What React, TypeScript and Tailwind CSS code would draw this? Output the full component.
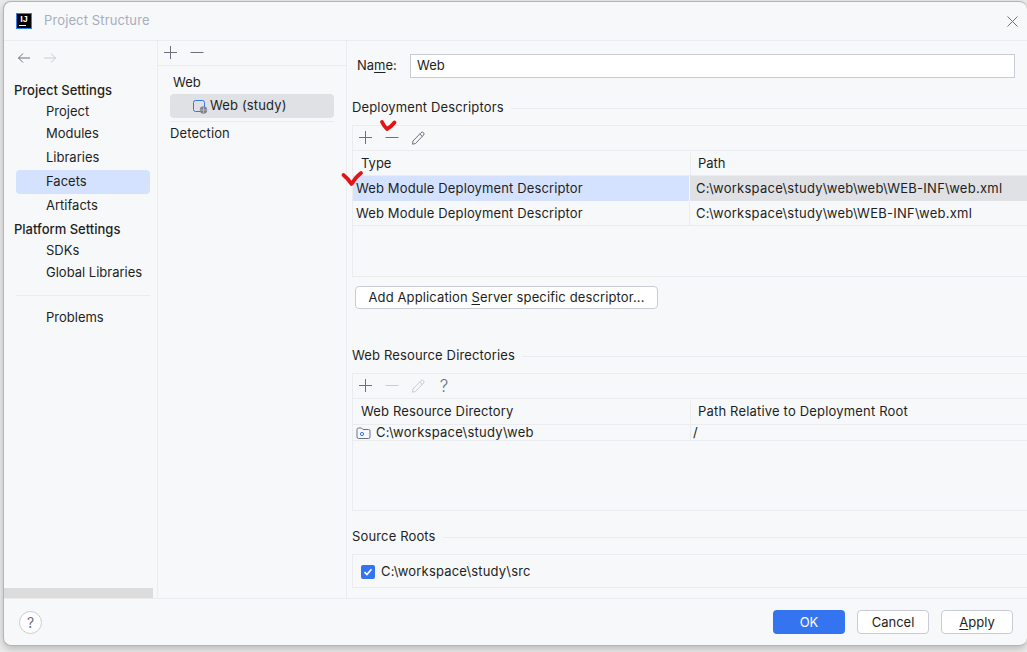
import React from "react";

const Plus = ({ c = "#6c707e" }: { c?: string }) => (
  <svg width="16" height="16" viewBox="0 0 16 16" fill="none" stroke={c} strokeWidth="1">
    <path d="M7.5 1v13M1 7.5h13" />
  </svg>
);
const Minus = ({ c = "#6c707e" }: { c?: string }) => (
  <svg width="16" height="16" viewBox="0 0 16 16" fill="none" stroke={c} strokeWidth="1">
    <path d="M1.5 7.5h13" />
  </svg>
);
const Pencil = ({ c = "#6c707e" }: { c?: string }) => (
  <svg width="16" height="16" viewBox="0 0 16 16" fill="none" stroke={c} strokeWidth="1">
    <path d="M3 11l8-8.3a1.7 1.7 0 0 1 2.5 0 1.7 1.7 0 0 1 0 2.4L5.5 13.5l-3 .7zM9.8 4l2.6 2.5" />
  </svg>
);

const NavItem = ({ label, h, selected }: { label: string; h: string; selected?: boolean }) => (
  <div className={`${h} flex items-center pl-[30px] ml-3 mr-[7px] rounded-[4px] ${selected ? "bg-[#d4e2ff]" : ""}`}>{label}</div>
);

const GroupTitle = ({ title }: { title: string }) => (
  <div className="flex items-center h-4 gap-[7px] pl-[5px]">
    <span className="tracking-[0.14px]">{title}</span>
    <div className="flex-1 h-px bg-[#ebecf0]" />
  </div>
);

export default function App() {
  return (
    <div
      className="relative w-[1027px] h-[652px] overflow-hidden bg-[#ececec] pl-[3px] pt-px text-[13px] text-[#1e1f22]"
      style={{ fontFamily: "Inter, 'Liberation Sans', sans-serif" }}
    >
      <div className="w-[1024px] h-[645px] bg-[#f7f8fa] rounded-[8px] border-t border-l border-b border-[#b4b4b4] shadow-[0_3px_8px_rgba(0,0,0,0.22)] flex flex-col overflow-hidden">
        {/* Title bar */}
        <div className="h-[39px] shrink-0 flex items-center border-b border-[#ebecf0] pl-3 pr-[9px]">
          <div className="w-4 h-4 bg-black border border-[#2f7fe8] flex flex-col items-center text-white font-bold text-[9px] leading-[9px] pt-px" style={{ fontFamily: "'Liberation Sans', sans-serif" }}>
            <span>IJ</span>
            <span className="w-[7px] h-px bg-white mt-px mr-[3px]" />
          </div>
          <span className="ml-[12px] text-[#a8adbd] tracking-[0.12px]">Project Structure</span>
          <svg className="ml-auto" width="11" height="11" viewBox="0 0 11 11" fill="none" stroke="#6c707e" strokeWidth="1">
            <path d="M.5.5l10 10M10.5.5l-10 10" />
          </svg>
        </div>

        <div className="h-[558px] shrink-0 flex border-b border-[#ebecf0]">
          {/* Sidebar */}
          <div className="w-[154px] shrink-0 border-r border-[#ebecf0] flex flex-col relative">
            <div className="h-[32px] flex items-center pl-3 gap-[10px] pt-[1px]">
              <svg width="16" height="16" viewBox="0 0 16 16" fill="none" stroke="#6c707e"><path d="M14 8H2.5M7 3.5L2.5 8 7 12.5" /></svg>
              <svg width="16" height="16" viewBox="0 0 16 16" fill="none" stroke="#c9ccd6"><path d="M2 8h11.5M9 3.5L13.5 8 9 12.5" /></svg>
            </div>
            <div className="h-[17px] mt-[9px] pl-[10px] font-medium flex items-center">Project Settings</div>
            <div className="h-[22px] mt-[2px] flex items-center pl-[42px]">Project</div>
            <div className="h-[22px] flex items-center pl-[42px]">Modules</div>
            <NavItem label="Libraries" h="h-[24px] mt-[1px]" />
            <NavItem label="Facets" h="h-[24px]" selected />
            <NavItem label="Artifacts" h="h-[24px]" />
            <div className="h-[24px] pl-[10px] font-medium flex items-center">Platform Settings</div>
            <div className="h-[22px] mt-[-2px] flex items-center pl-[42px]">SDKs</div>
            <div className="h-[22px] flex items-center pl-[42px]">Global Libraries</div>
            <div className="h-px bg-[#ebecf0] ml-3 mr-[7px] mt-[11px]" />
            <div className="h-[22px] mt-[11px] flex items-center pl-[42px]">Problems</div>
            <div className="mt-auto h-[10px] w-[149px] bg-[#dcdcdd]" />
          </div>

          {/* Middle column */}
          <div className="w-[189px] shrink-0 border-r border-[#ebecf0] flex flex-col">
            <div className="h-[25px] shrink-0 border-b border-[#ebecf0] flex items-center pl-[5px] gap-[10px]">
              <Plus />
              <Minus />
            </div>
            <div className="h-[28px] flex items-end pl-[15px] pb-[2px]">Web</div>
            <div className="h-[24px] ml-3 mr-3 bg-[#dfe1e5] rounded-[4px] flex items-center pl-[23px] gap-[2px]">
              <svg width="15" height="15" viewBox="0 0 15 15" fill="none">
                <rect x="0.5" y="1.5" width="11" height="11" rx="2" stroke="#3574f0" />
                <circle cx="10.5" cy="11" r="3.7" fill="#7e828e" />
                <path d="M7 11h7M10.5 7.5v7" stroke="#dfe1e5" strokeWidth="0.5" />
              </svg>
              <span className="tracking-[0.15px]">Web (study)</span>
            </div>
            <div className="h-px bg-[#ebecf0] mx-3 mt-[3px]" />
            <div className="h-[24px] flex items-center pl-3 tracking-[0.1px]">Detection</div>
          </div>

          {/* Right panel */}
          <div className="flex-1 min-w-0 flex flex-col">
            <div className="h-[24px] mt-[13px] flex items-center pl-[10px]">
              <span className="w-[53px]">
                Na<span className="underline underline-offset-2">m</span>e:
              </span>
              <div className="w-[605px] h-[24px] bg-white border border-[#c9ccd6] flex items-center pl-[6px]">Web</div>
            </div>

            <div className="mt-[22px]"><GroupTitle title="Deployment Descriptors" /></div>
            <div className="mt-[9px] ml-[5px] h-[152px] border-t border-l border-b border-[#ebecf0] flex flex-col">
              <div className="h-[25px] shrink-0 border-b border-[#ebecf0] flex items-center pl-[5px] gap-[10px]">
                <Plus />
                <Minus />
                <Pencil />
              </div>
              <div className="h-[24px] pt-px shrink-0 flex items-center">
                <div className="w-[337px] pl-2">Type</div>
                <div className="flex-1 h-[22px] border-l border-[#ebecf0] pl-[7px] flex items-center">Path</div>
              </div>
              <div className="h-[26px] shrink-0 flex border-t border-[#ebecf0]">
                <div className="w-[336px] bg-[#d4e2ff] pl-[3px] flex items-center tracking-[0.13px]">Web Module Deployment Descriptor</div>
                <div className="flex-1 bg-[#dfe1e5] pl-[6px] ml-px flex items-center tracking-[0.26px]">C:\workspace\study\web\web\WEB-INF\web.xml</div>
              </div>
              <div className="h-[25px] shrink-0 flex border-b border-[#ebecf0]">
                <div className="w-[336px] pl-[3px] pt-px flex items-center tracking-[0.13px]">Web Module Deployment Descriptor</div>
                <div className="flex-1 border-l border-[#ebecf0] pl-[6px] pt-px flex items-center tracking-[0.26px]">C:\workspace\study\web\WEB-INF\web.xml</div>
              </div>
            </div>
            <div className="mt-[9px] ml-2 w-[303px] h-[23px] bg-white border border-[#c9ccd6] rounded-[4px] flex items-center justify-center">
              <span className="tracking-[0.12px]">
                Add Application <span className="underline underline-offset-2">S</span>erver specific descriptor...
              </span>
            </div>

            <div className="mt-[39px]"><GroupTitle title="Web Resource Directories" /></div>
            <div className="mt-[9px] ml-[5px] h-[138px] border-t border-l border-b border-[#ebecf0] flex flex-col">
              <div className="h-[25px] shrink-0 border-b border-[#ebecf0] flex items-center pl-[5px] gap-[10px]">
                <Plus />
                <Minus c="#c9ccd6" />
                <Pencil c="#c9ccd6" />
                <span className="w-4 text-center text-[17px] leading-4 font-light text-[#6c707e]">?</span>
              </div>
              <div className="h-[25px] shrink-0 flex items-center">
                <div className="w-[337px] pl-2 tracking-[0.14px]">Web Resource Directory</div>
                <div className="flex-1 h-[22px] border-l border-[#ebecf0] pl-[7px] flex items-center tracking-[0.18px]">Path Relative to Deployment Root</div>
              </div>
              <div className="h-[17px] shrink-0 flex border-y border-[#ebecf0]">
                <div className="w-[337px] pl-[3px] flex items-center gap-[5px]">
                  <svg width="15" height="14" viewBox="0 0 15 14" fill="none">
                    <path d="M1 3.5A1.5 1.5 0 0 1 2.5 2h3l1.5 1.5h5.5A1.5 1.5 0 0 1 14 5v6a1.5 1.5 0 0 1-1.5 1.5h-10A1.5 1.5 0 0 1 1 11z" stroke="#6c707e" />
                    <circle cx="6" cy="8" r="1.6" stroke="#3574f0" />
                  </svg>
                  <span className="tracking-[0.27px]">C:\workspace\study\web</span>
                </div>
                <div className="flex-1 border-l border-[#ebecf0] pl-[2px] flex items-center">/</div>
              </div>
            </div>

            <div className="mt-[18px]"><GroupTitle title="Source Roots" /></div>
            <div className="mt-[9px] ml-[5px] h-[34px] border-t border-l border-b border-[#ebecf0] flex items-center pl-[8px] pt-px gap-[6px]">
              <div className="w-[14px] h-[14px] bg-[#3574f0] rounded-[2px] flex items-center justify-center">
                <svg width="10" height="10" viewBox="0 0 10 10" fill="none" stroke="white" strokeWidth="1.7">
                  <path d="M1.5 5.2l2.4 2.4 4.6-5.4" />
                </svg>
              </div>
              <span className="tracking-[0.18px]">C:\workspace\study\src</span>
            </div>
          </div>
        </div>

        {/* Footer */}
        <div className="flex-1 flex items-center pl-[15px] pr-[14px]">
          <div className="w-[23px] h-[23px] rounded-full bg-white border border-[#c9ccd6] flex items-center justify-center text-[#6c707e] text-[14px]">?</div>
          <div className="ml-auto flex gap-3">
            <div className="w-[72px] h-[24px] pt-px rounded-[4px] bg-[#3574f0] text-white flex items-center justify-center">OK</div>
            <div className="w-[72px] h-[24px] pt-px rounded-[4px] bg-white border border-[#c9ccd6] flex items-center justify-center">Cancel</div>
            <div className="w-[72px] h-[24px] pt-px rounded-[4px] bg-white border border-[#c9ccd6] flex items-center justify-center">
              <span><span className="underline underline-offset-2">A</span>pply</span>
            </div>
          </div>
        </div>
      </div>

      {/* Red hand-drawn annotations */}
      <svg className="absolute left-[340px] top-[118px]" width="60" height="72" viewBox="0 0 60 72" fill="none" stroke="#e41414" strokeWidth="3.8" strokeLinecap="round" strokeLinejoin="round">
        <path d="M42 4c1.5 3 3 5.5 5 7C50 9.5 52.5 7 54.5 4.5" />
        <path d="M3.5 57c2.5 2 5.5 5 8 9C14 62 17 58 21 55" />
      </svg>
    </div>
  );
}
